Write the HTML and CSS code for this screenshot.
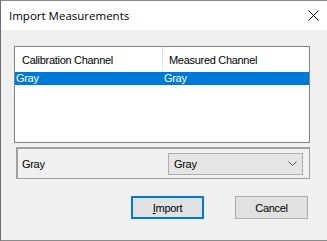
FILE: index.html
```html
<!DOCTYPE html>
<html>
<head>
<meta charset="utf-8">
<link rel="stylesheet" href="styles.css">
</head>
<body>
<div class="window">
  <div class="titlebar">
    <span class="title">Import Measurements</span>
    <svg class="close" width="11" height="11" viewBox="0 0 11 11"><path d="M0.5 0.5 L10.5 10.5 M10.5 0.5 L0.5 10.5" stroke="#000" stroke-width="1" fill="none"/></svg>
  </div>
  <div class="content">
    <div class="listview">
      <div class="header">
        <div class="col c1">Calibration Channel</div>
        <div class="col c2">Measured Channel</div>
      </div>
      <div class="row selected">
        <div class="cell c1">Gray</div>
        <div class="cell c2">Gray</div>
      </div>
    </div>
    <div class="panel">
      <span class="label">Gray</span>
      <div class="combo">
        <span>Gray</span>
        <svg width="9" height="5" viewBox="0 0 9 5"><path d="M0.5 0.5 L4.5 4.5 L8.5 0.5" stroke="#555" stroke-width="1" fill="none"/></svg>
      </div>
    </div>
    <div class="buttons">
      <button class="btn default"><u>I</u>mport</button>
      <button class="btn">Cancel</button>
    </div>
  </div>
</div>
</body>
</html>
```
FILE: styles.css
```css
html, body {
  margin: 0;
  padding: 0;
  background: #f0f0f0;
}
.window {
  width: 326px;
  height: 239px;
  border-left: 1px solid #6d6d6d;
  border-top: 1px solid #8a8a8a;
  border-bottom: 1px solid #8a8a8a;
  background: #f0f0f0;
  font-family: "Liberation Sans", Arial, sans-serif;
  font-size: 11px;
  letter-spacing: -0.3px;
  color: #000;
}
.titlebar {
  height: 29px;
  background: #fff;
  display: flex;
  align-items: center;
  justify-content: space-between;
  padding: 0 8px 0 8px;
  letter-spacing: 0;
}
.title {
  font-family: "Open Sans", "Noto Sans", sans-serif;
  font-size: 11.5px;
  color: #000;
  margin-top: -1px;
}
.close {
  margin-top: -1px;
}
.content {
  padding: 16px 0 0 13px;
}
.listview {
  width: 294px;
  height: 95px;
  border: 1px solid #828282;
  background: #fff;
}
.header {
  display: flex;
  height: 25px;
}
.col {
  line-height: 24px;
  padding-top: 1px;
}
.header .c1 {
  width: 140px;
  padding-left: 7px;
  border-right: 1px solid #e5e5e5;
}
.header .c2 {
  padding-left: 6px;
}
.row {
  display: flex;
  height: 13px;
  line-height: 13px;
}
.row.selected {
  background: #0078d7;
  color: #fff;
}
.row .c1 {
  width: 147px;
  padding-left: 1px;
}
.row .c2 {
  padding-left: 1px;
}
.panel {
  margin: 4px 0 0 2px;
  width: 285px;
  height: 29px;
  border-style: solid;
  border-color: #a0a0a0;
  border-width: 2px 1px 1px 2px;
  display: flex;
  align-items: center;
  justify-content: space-between;
  padding-right: 6px;
}
.label {
  padding-left: 4px;
}
.combo {
  width: 123px;
  height: 20px;
  border: 1px solid #adadad;
  background: #e5e5e5;
  display: flex;
  align-items: center;
  justify-content: space-between;
  padding: 0 5px;
}
.buttons {
  display: flex;
  gap: 31px;
  margin: 17px 0 0 117px;
}
.btn {
  width: 73px;
  height: 23px;
  background: #e1e1e1;
  border: 1px solid #adadad;
  font-family: "Liberation Sans", Arial, sans-serif;
  font-size: 11px;
  letter-spacing: -0.3px;
  color: #000;
  padding: 0;
  margin: 0;
}
.btn.default {
  border: 2px solid #0078d7;
}
```
